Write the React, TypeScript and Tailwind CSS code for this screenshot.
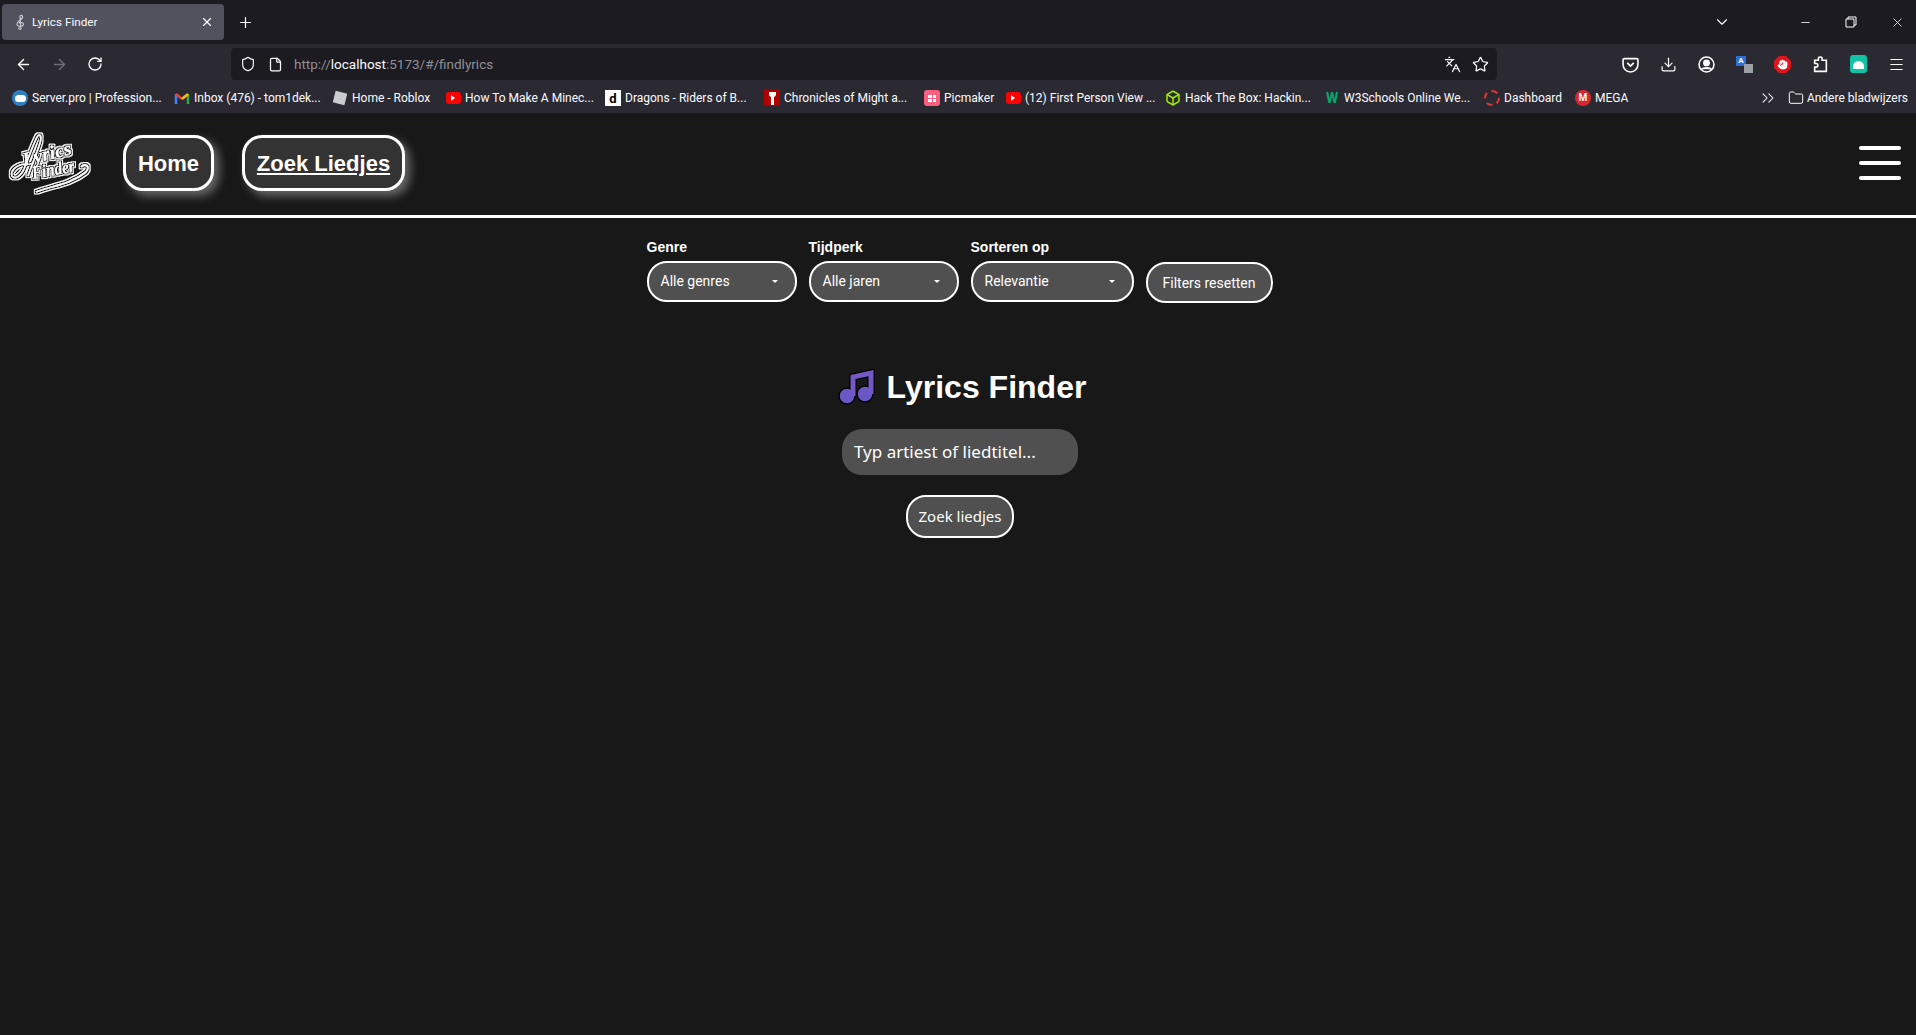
import React from 'react';
import { ArrowLeft, ArrowRight, RotateCw, Plus, X, ChevronDown, Minus, Shield, File, Languages, Star, Download, Menu, ChevronsRight, Folder, Hand, Box } from 'lucide-react';

const Youtube = () => (
  <div className="flex h-[12px] w-[15px] items-center justify-center rounded-[3px] bg-[#f00]">
    <div className="h-0 w-0 border-y-[3px] border-l-[4px] border-y-transparent border-l-white" />
  </div>
);

const BOOKMARKS = [
  {
    label: 'Server.pro | Profession...',
    width: 'w-[162px]',
    icon: (
      <div className="flex h-[16px] w-[16px] items-center justify-center rounded-full bg-[#2f7fc1]">
        <div className="h-[7px] w-[11px] rounded-full bg-white" />
      </div>
    ),
  },
  {
    label: 'Inbox (476) - tom1dek...',
    width: 'w-[158px]',
    icon: (
      <svg viewBox="0 0 16 16" className="h-[16px] w-[16px] fill-none stroke-[2.5]">
        <path d="M2 14V4" stroke="#4285f4" />
        <path d="M14 14V4" stroke="#34a853" />
        <path d="M2 4l6 5" stroke="#ea4335" />
        <path d="M8 9l6-5" stroke="#fbbc04" />
      </svg>
    ),
  },
  {
    label: 'Home - Roblox',
    width: 'w-[113px]',
    icon: (
      <div className="flex h-[16px] w-[16px] items-center justify-center">
        <div className="h-[12px] w-[12px] rotate-[14deg] bg-[#c9ccd1]" />
      </div>
    ),
  },
  { label: 'How To Make A Minec...', width: 'w-[160px]', icon: <div className="flex w-[16px] justify-center"><Youtube /></div> },
  {
    label: 'Dragons - Riders of B...',
    width: 'w-[159px]',
    icon: <div className="flex h-[16px] w-[16px] items-center justify-center bg-white text-[13px] font-bold leading-none text-black">d</div>,
  },
  {
    label: 'Chronicles of Might a...',
    width: 'w-[160px]',
    icon: (
      <div className="flex h-[16px] w-[16px] items-start justify-center bg-[#b00000] pt-[2px]">
        <div className="h-[5px] w-[7px] rounded-b-[3px] bg-white" />
        <div className="absolute mt-[4px] h-[9px] w-[3px] bg-white" />
      </div>
    ),
  },
  {
    label: 'Picmaker',
    width: 'w-[81px]',
    icon: (
      <div className="grid h-[16px] w-[16px] grid-cols-2 content-center justify-center gap-[1px] rounded-[3px] bg-[#f9607f] px-[4px]">
        <div className="h-[3px] bg-white" />
        <div className="h-[3px] bg-white" />
        <div className="h-[3px] bg-white" />
        <div className="h-[3px] bg-white" />
      </div>
    ),
  },
  { label: '(12) First Person View ...', width: 'w-[160px]', icon: <div className="flex w-[16px] justify-center"><Youtube /></div> },
  { label: 'Hack The Box: Hackin...', width: 'w-[159px]', icon: <Box className="h-[16px] w-[16px] text-[#9fef00]" strokeWidth={2.25} /> },
  {
    label: 'W3Schools Online We...',
    width: 'w-[160px]',
    icon: <div className="w-[16px] text-center text-[14px] font-bold leading-none text-[#04aa6d]">W</div>,
  },
  {
    label: 'Dashboard',
    width: 'w-[91px]',
    icon: <div className="h-[16px] w-[16px] rounded-full border-2 border-dashed border-[#e5322d]" />,
  },
  {
    label: 'MEGA',
    width: 'w-[63px]',
    icon: <div className="flex h-[16px] w-[16px] items-center justify-center rounded-full bg-[#d9272e] text-[10px] font-bold leading-none">M</div>,
  },
];

const FILTERS = [
  { label: 'Genre', value: 'Alle genres', width: 'w-[150px]' },
  { label: 'Tijdperk', value: 'Alle jaren', width: 'w-[150px]' },
  { label: 'Sorteren op', value: 'Relevantie', width: 'w-[163px]' },
];

const BrowserChrome = () => (
  <div className="font-['Roboto',sans-serif] text-[12px] text-[#fbfbfe]">
    <div className="flex h-[44px] items-center bg-[#1c1b22] pl-[2px]">
      <div className="flex h-[36px] w-[222px] items-center rounded-[4px] bg-[#52525e] pl-[11px] pr-[10px]">
        <svg viewBox="0 0 16 16" className="mr-[3px] h-[16px] w-[16px] fill-none stroke-[#c8c8cc] stroke-[1.2]">
          <path d="M8 15c-1.500 1-3-1-1.500-1.500M8 15 7 3c0-2.500 3-2 2.500 .5C9 5.500 3.500 7.500 4 10.500c.5 2.500 6 2.500 6.500 0 .3-2-3.500-3-4.500-1" />
        </svg>
        <span className="mt-[1px] flex-1 text-[11.700px]">Lyrics Finder</span>
        <X className="h-[14px] w-[14px]" />
      </div>
      <Plus className="ml-[13px] h-[17px] w-[17px]" strokeWidth={1.75} />
      <div className="flex-1" />
      <ChevronDown className="mr-[68px] h-[18px] w-[18px]" strokeWidth={1.5} />
      <Minus className="mr-[33px] h-[13px] w-[13px]" strokeWidth={1.5} />
      <svg viewBox="0 0 12 12" className="mr-[33px] h-[12px] w-[12px] fill-none stroke-white">
        <path d="M3 3V1h8v8H9M1 3h8v8H1z" />
      </svg>
      <X className="mr-[11px] h-[15px] w-[15px]" strokeWidth={1.25} />
    </div>
    <div className="flex h-[36px] items-center bg-[#2b2a33] pl-[15px] pt-[4px]">
      <ArrowLeft className="h-[17px] w-[17px]" strokeWidth={2} />
      <ArrowRight className="ml-[19px] h-[17px] w-[17px] text-[#6f6e75]" strokeWidth={2} />
      <RotateCw className="ml-[19px] h-[16px] w-[16px]" strokeWidth={2} />
      <div className="ml-[128px] flex h-[32px] w-[1266px] items-center self-end rounded-[4px] bg-[#1c1b22] pl-[9px] pr-[8px]">
        <Shield className="h-[16px] w-[16px]" strokeWidth={1.75} />
        <File className="ml-[12px] h-[15px] w-[15px]" strokeWidth={2} />
        <span className="ml-[11px] mt-[1px] flex-1 text-[13.500px] text-[#8f8f94]">
          http://<span className="text-[#fbfbfe]">localhost</span>:5173/#/findlyrics
        </span>
        <Languages className="mr-[11px] h-[17px] w-[17px]" strokeWidth={1.75} />
        <Star className="h-[17px] w-[17px]" strokeWidth={1.75} />
      </div>
      <div className="ml-[125px] flex items-center gap-[21px]">
        <svg viewBox="0 0 16 16" className="h-[17px] w-[17px] fill-none stroke-white stroke-[1.5]">
          <path d="M2 2.500h12a1 1 0 0 1 1 1V8a7 7 0 0 1-14 0V3.500a1 1 0 0 1 1-1zM5 6.500l3 3 3-3" />
        </svg>
        <Download className="h-[17px] w-[17px]" strokeWidth={1.75} />
        <svg viewBox="0 0 16 16" className="h-[17px] w-[17px] fill-none stroke-white stroke-[1.5]">
          <circle cx="8" cy="8" r="7" />
          <circle cx="8" cy="6.500" r="2.500" fill="#fff" />
          <path d="M3.500 12.500c1-2 8-2 9 0" fill="#fff" />
        </svg>
        <div className="relative h-[17px] w-[17px]">
          <div className="h-[10px] w-[10px] bg-[#2d6fd6] text-center text-[8px] font-bold leading-[10px]">A</div>
          <div className="absolute bottom-0 right-0 h-[9px] w-[9px] bg-[#9aa0a6]" />
        </div>
        <div className="relative flex h-[17px] w-[17px] items-center justify-center">
          <svg viewBox="0 0 17 17" className="absolute inset-0 h-[17px] w-[17px] fill-[#e2131c]">
            <polygon points="5,0 12,0 17,5 17,12 12,17 5,17 0,12 0,5" />
          </svg>
          <Hand className="relative h-[11px] w-[11px] fill-white text-white" strokeWidth={1.5} />
        </div>
        <svg viewBox="0 0 16 16" className="h-[17px] w-[17px] fill-none stroke-white stroke-[1.5]">
          <path d="M6 2.500c0-2 3.500-2 3.500 0V4H13.500v10.500H2.500V10.500h1.500c2 0 2-3.500 0-3.500H2.500V4H6z" />
        </svg>
        <div className="flex h-[18px] w-[17px] items-end justify-center rounded-[3px] bg-[#12c2a6] pb-[4px]">
          <div className="h-[8px] w-[11px] rounded-t-full bg-white" />
        </div>
        <Menu className="h-[17px] w-[17px]" strokeWidth={1.5} />
      </div>
    </div>
    <div className="flex h-[33px] items-center bg-[#2b2a33] pl-[12px] pt-[3px]">
      {BOOKMARKS.map((b) => (
        <div key={b.label} className={`flex items-center gap-[4px] whitespace-nowrap ${b.width}`}>
          <div className="flex w-[16px] shrink-0 justify-center">{b.icon}</div>
          <span>{b.label}</span>
        </div>
      ))}
      <div className="flex-1" />
      <ChevronsRight className="mr-[10px] h-[20px] w-[20px]" strokeWidth={1.25} />
      <Folder className="mr-[3px] h-[16px] w-[16px]" strokeWidth={1.5} />
      <span className="mr-[8px]">Andere bladwijzers</span>
    </div>
  </div>
);

const Logo = () => (
  <svg viewBox="0 0 88 66" className="h-[66px] w-[88px]">
    <defs>
      <filter id="sticker" x="-10%" y="-10%" width="120%" height="120%">
        <feMorphology in="SourceAlpha" operator="dilate" radius="0.9" result="inner" />
        <feFlood floodColor="#181818" />
        <feComposite in2="inner" operator="in" result="dark" />
        <feMorphology in="SourceAlpha" operator="dilate" radius="1.8" result="outer" />
        <feFlood floodColor="#ffffff" />
        <feComposite in2="outer" operator="in" result="light" />
        <feMerge>
          <feMergeNode in="light" />
          <feMergeNode in="dark" />
          <feMergeNode in="SourceGraphic" />
        </feMerge>
      </filter>
    </defs>
    <g filter="url(#sticker)" fill="#fff" fontFamily="'Liberation Serif', serif" fontStyle="italic" fontWeight="700">
      <path d="M20 34c-10 1-15 8-13 12 3 4 9 0 12-7 4-10 9-24 13-32 3-5 5 0 3 6-3 10-9 24-12 33" fill="none" stroke="#fff" strokeWidth="1.6" />
      <path d="M31 62c14-6 34-7 50-20 5-6-1-9-5-5" fill="none" stroke="#fff" strokeWidth="1.8" />
      <text x="19" y="36" fontSize="19" textLength="50" lengthAdjust="spacingAndGlyphs" transform="rotate(-14 19 36)">Lyrics</text>
      <text x="28" y="49" fontSize="18" textLength="43" lengthAdjust="spacingAndGlyphs" transform="rotate(-10 28 49)">Finder</text>
    </g>
  </svg>
);

const NavLink = ({ label, underline, width }: { label: string; underline?: boolean; width: string }) => (
  <a className={`flex h-[56px] items-center justify-center rounded-[20px] border-[3px] border-white bg-[#333333] text-[22px] font-bold text-white shadow-[5px_5px_10px_rgba(255,255,255,0.35)] ${width} ${underline ? 'underline' : ''}`}>
    {label}
  </a>
);

const Chevron = () => <span className="h-0 w-0 border-x-[3px] border-t-[3px] border-x-transparent border-t-white" />;

export default function App() {
  return (
    <div className="flex h-[1035px] flex-col overflow-hidden bg-[#181818] font-['Liberation_Sans',sans-serif] text-white">
      <BrowserChrome />

      <nav className="flex h-[105px] shrink-0 items-center border-b-[3px] border-white pb-[2px] pl-[5px] pr-[15px]">
        <Logo />
        <div className="ml-[30px] flex items-center gap-[28px]">
          <NavLink label="Home" width="w-[91px]" />
          <NavLink label="Zoek Liedjes" underline width="w-[163px]" />
        </div>
        <div className="ml-auto flex w-[42px] flex-col gap-[11px]">
          <div className="h-[4px] rounded-[2px] bg-white" />
          <div className="h-[4px] rounded-[2px] bg-white" />
          <div className="h-[4px] rounded-[2px] bg-white" />
        </div>
      </nav>

      <div className="flex items-end justify-center gap-[12px] pl-[3px] pt-[20px]">
        {FILTERS.map((f) => (
          <div key={f.label} className="flex flex-col gap-[4px]">
            <label className="text-[14px] font-bold leading-[19px]">{f.label}</label>
            <div className={`flex h-[41px] items-center justify-between rounded-[20px] border-2 border-white bg-[#505050] pl-[12px] pr-[17px] font-['Roboto',sans-serif] text-[14px] ${f.width}`}>
              <span>{f.value}</span>
              <Chevron />
            </div>
          </div>
        ))}
        <button className="mb-[-1px] h-[41px] w-[127px] rounded-[20px] border-2 border-white bg-[#505050] pt-[1px] font-['Roboto',sans-serif] text-[14px] text-white">
          Filters resetten
        </button>
      </div>

      <main className="flex flex-col items-center pl-[4px] pt-[56px]">
        <h1 className="ml-[4px] flex items-center gap-[12px] text-[32px] font-bold leading-[58px]">
          <svg viewBox="0 0 37 36" className="h-[36px] w-[37px]">
            <path d="M15 27V8l18-4v21" fill="none" stroke="#000" strokeWidth="7.500" />
            <circle cx="9" cy="27" r="8" fill="#6a57c6" stroke="#000" strokeWidth="1.500" />
            <circle cx="27" cy="25" r="8" fill="#6a57c6" stroke="#000" strokeWidth="1.500" />
            <path d="M15 27V8l18-4v21" fill="none" stroke="#7459c6" strokeWidth="5" />
          </svg>
          Lyrics Finder
        </h1>
        <div className="mt-[13px] flex h-[46px] w-[236px] items-center rounded-[20px] bg-[#505050] pl-[12px] font-['Noto_Sans',sans-serif] text-[17px]">
          Typ artiest of liedtitel...
        </div>
        <button className="mt-[20px] h-[43px] w-[108px] rounded-[20px] border-2 border-white bg-[#505050] font-['Noto_Sans',sans-serif] text-[15px] text-white">
          Zoek liedjes
        </button>
      </main>
    </div>
  );
}
